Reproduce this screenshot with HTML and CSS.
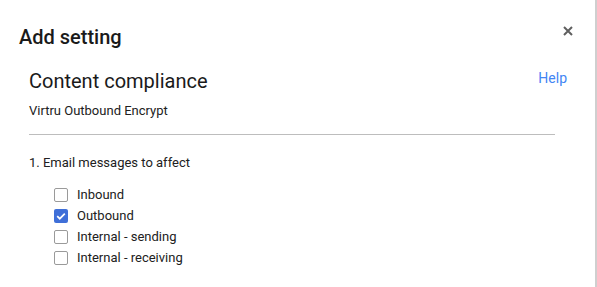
FILE: index.html
```html
<!DOCTYPE html>
<html>
<head>
<meta charset="utf-8">
<link rel="stylesheet" href="styles.css">
</head>
<body>
<div class="dialog">
  <div class="header">
    <h1 class="title">Add setting</h1>
    <span class="close" aria-label="Close">
      <svg width="10" height="10" viewBox="0 0 10 10"><path d="M1 1 L9 9 M9 1 L1 9" stroke="#5f5f5f" stroke-width="2" fill="none"/></svg>
    </span>
  </div>
  <div class="content">
    <div class="row">
      <h2 class="subtitle">Content compliance</h2>
      <a class="help">Help</a>
    </div>
    <div class="name">Virtru Outbound Encrypt</div>
    <div class="divider"></div>
    <div class="section-title">1. Email messages to affect</div>
    <ul class="options">
      <li class="option"><span class="box"></span><span class="label">Inbound</span></li>
      <li class="option"><span class="box checked"><svg width="14" height="14" viewBox="0 0 14 14"><path d="M3.2 7.1 L5.8 9.7 L10.8 4.7" stroke="#fff" stroke-width="1.7" fill="none"/></svg></span><span class="label">Outbound</span></li>
      <li class="option"><span class="box"></span><span class="label">Internal - sending</span></li>
      <li class="option"><span class="box"></span><span class="label">Internal - receiving</span></li>
    </ul>
  </div>
</div>
<div class="edge"></div>
</body>
</html>
```
FILE: styles.css
```css
html, body {
  margin: 0;
  padding: 0;
  height: 100%;
  background: #fff;
}
body {
  display: flex;
  font-family: Roboto, "Liberation Sans", Arial, sans-serif;
  color: #212121;
}
.dialog {
  flex: 1;
}
.edge {
  width: 2px;
  background: #cfcfcf;
}
.header {
  display: flex;
  justify-content: space-between;
  align-items: flex-start;
  padding: 25px 22px 0 19px;
}
.title {
  margin: 0;
  font-size: 20px;
  line-height: 24px;
  font-weight: 500;
  color: #1a1a1a;
}
.close {
  display: block;
  width: 10px;
  height: 10px;
  margin-top: 1px;
}
.close svg {
  display: block;
}
.content {
  padding: 18px 28px 0 29px;
}
.row {
  display: flex;
  justify-content: space-between;
  align-items: flex-start;
}
.subtitle {
  margin: 0;
  font-size: 20px;
  line-height: 28px;
  font-weight: 400;
  color: #1a1a1a;
}
.help {
  font-size: 14px;
  line-height: 20px;
  margin-top: 1px;
  color: #4285f4;
  cursor: pointer;
}
.name {
  margin-top: 7px;
  font-size: 13px;
  line-height: 18px;
}
.divider {
  margin: 14px 12px 0 0;
  height: 1px;
  background: #bdbdbd;
}
.section-title {
  margin-top: 19px;
  font-size: 13px;
  line-height: 18px;
}
.options {
  list-style: none;
  margin: 12px 0 0 0;
  padding: 0 0 0 25px;
}
.option {
  display: flex;
  align-items: center;
  height: 21px;
}
.box {
  box-sizing: border-box;
  width: 14px;
  height: 14px;
  border: 1.5px solid #9a9a9a;
  border-radius: 2px;
  margin-right: 9px;
  display: flex;
}
.box.checked {
  border: none;
  background: #3f6fd8;
}
.label {
  font-size: 13px;
  line-height: 21px;
}
```
